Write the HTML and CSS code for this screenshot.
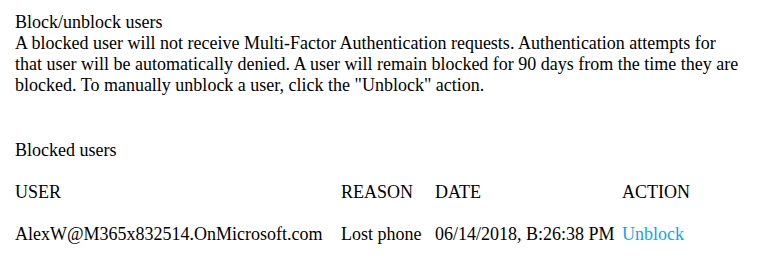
FILE: index.html
```html
<!DOCTYPE html>
<html>
<head>
<meta charset="utf-8">
<link rel="stylesheet" href="styles.css">
</head>
<body>
<div class="page">
  <section class="intro">
    <div class="title">Block/unblock users</div>
    <p class="desc">A blocked user will not receive Multi-Factor Authentication requests. Authentication attempts for that user will be automatically denied. A user will remain blocked for 90 days from the time they are blocked. To manually unblock a user, click the "Unblock" action.</p>
  </section>
  <section class="blocked">
    <div class="subtitle">Blocked users</div>
    <div class="table">
      <div class="cell">USER</div>
      <div class="cell">REASON</div>
      <div class="cell">DATE</div>
      <div class="cell">ACTION</div>
      <div class="cell">AlexW@M365x832514.OnMicrosoft.com</div>
      <div class="cell">Lost phone</div>
      <div class="cell">06/14/2018, B:26:38 PM</div>
      <div class="cell"><a class="link" href="#">Unblock</a></div>
    </div>
  </section>
</div>
</body>
</html>
```
FILE: styles.css
```css
html, body {
  margin: 0;
  padding: 0;
  background: #ffffff;
}
.page {
  padding: 12px 15px 0 15px;
  font-family: "Liberation Serif", "Times New Roman", serif;
  font-size: 18px;
  line-height: 21px;
  color: #000000;
}
.title {
  margin: 0;
}
.desc {
  margin: 0;
  width: 728px;
}
.blocked {
  margin-top: 44px;
}
.subtitle {
  margin-bottom: 21px;
}
.table {
  display: grid;
  grid-template-columns: 326px 94px 187px auto;
  justify-content: start;
  row-gap: 21px;
  white-space: nowrap;
}
.link {
  color: #1ba1e2;
  text-decoration: none;
}
```
